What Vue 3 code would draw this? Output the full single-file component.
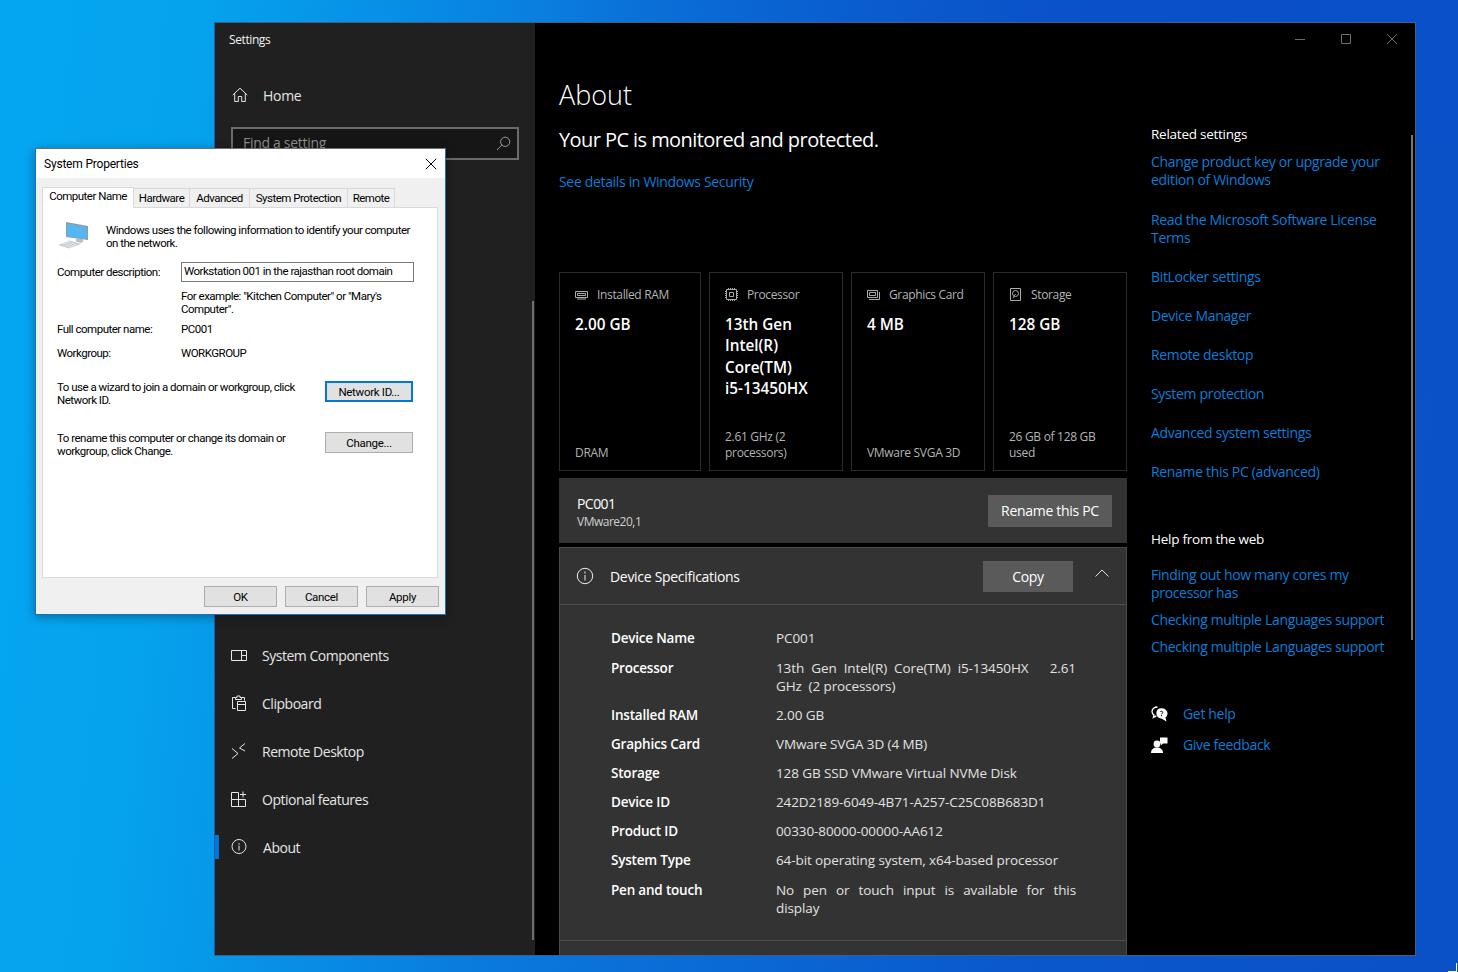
<script setup>
const cards = [
  { key: 'ram', title: 'Installed RAM', value: ['2.00 GB'], foot: ['DRAM'], wide: true },
  { key: 'cpu', title: 'Processor', value: ['13th Gen', 'Intel(R)', 'Core(TM)', 'i5-13450HX'], foot: ['2.61 GHz (2', 'processors)'] },
  { key: 'gpu', title: 'Graphics Card', value: ['4 MB'], foot: ['VMware SVGA 3D'] },
  { key: 'disk', title: 'Storage', value: ['128 GB'], foot: ['26 GB of 128 GB', 'used'] }
]

const specs = [
  { label: 'Device Name', value: 'PC001' },
  { label: 'Processor', value: '13th Gen Intel(R) Core(TM) i5-13450HX \u00a0 2.61 GHz \u00a0(2 processors)' },
  { label: 'Installed RAM', value: '2.00 GB' },
  { label: 'Graphics Card', value: 'VMware SVGA 3D (4 MB)' },
  { label: 'Storage', value: '128 GB SSD VMware Virtual NVMe Disk' },
  { label: 'Device ID', value: '242D2189-6049-4B71-A257-C25C08B683D1' },
  { label: 'Product ID', value: '00330-80000-00000-AA612' },
  { label: 'System Type', value: '64-bit operating system, x64-based processor' },
  { label: 'Pen and touch', value: 'No pen or touch input is available for this display' }
]

const related = [
  { text: 'Change product key or upgrade your edition of Windows', gap: 22 },
  { text: 'Read the Microsoft Software License Terms', gap: 21 },
  { text: 'BitLocker settings', gap: 21 },
  { text: 'Device Manager', gap: 21 },
  { text: 'Remote desktop', gap: 21 },
  { text: 'System protection', gap: 21 },
  { text: 'Advanced system settings', gap: 21 },
  { text: 'Rename this PC (advanced)', gap: 0 }
]

const tabs = ['Hardware', 'Advanced', 'System Protection', 'Remote']
</script>

<template>
  <div class="desktop">
    <div class="settings">
      <aside class="side">
        <div class="app-title">Settings</div>
        <div class="home">
          <svg width="16" height="16" viewBox="0 0 16 16" fill="none" stroke="#e6e6e6" stroke-width="1">
            <path d="M.8 8 8 1.2 15.2 8M2.7 6.400v8.100h3.600V9.500h3.400v5h3.600V6.400" />
          </svg>
          <span>Home</span>
        </div>
        <div class="search">
          <span class="search-text">Find a setting</span>
          <svg width="15" height="15" viewBox="0 0 15 15" fill="none" stroke="#9a9a9a" stroke-width="1">
            <circle cx="9.200" cy="5.800" r="4.600" />
            <path d="M5.800 9 1 14" />
          </svg>
        </div>
        <nav class="nav">
          <div class="nav-row">
            <svg width="16" height="16" viewBox="0 0 16 16" fill="none" stroke="#e6e6e6"><path d="M.5 3.500h15v10H.5zM10.500 3.500v10M10.500 8.500h5" /></svg>
            <span>System Components</span>
          </div>
          <div class="nav-row">
            <svg width="16" height="16" viewBox="0 0 16 16" fill="none" stroke="#e6e6e6"><path d="M4.500 13.500h-3v-11h3M10.500 2.500h3v3M4.500 2.500h1.500v-1.500h3v1.500h1.500v2h-6zM6.500 6.500h8v9h-8zM6.500 9.500h8" /></svg>
            <span>Clipboard</span>
          </div>
          <div class="nav-row">
            <svg width="16" height="16" viewBox="0 0 16 16" fill="none" stroke="#e6e6e6"><path d="M1 5.500 7 10.500 1 15.500M14 .5 8.500 5 14 8" /></svg>
            <span>Remote Desktop</span>
          </div>
          <div class="nav-row">
            <svg width="16" height="16" viewBox="0 0 16 16" fill="none" stroke="#e6e6e6"><path d="M.5 1.500h7v7h-7zM.5 8.500h7v7h-7zM7.500 8.500h7v7h-7zM12 .5v6M9 3.500h6" /></svg>
            <span>Optional features</span>
          </div>
          <div class="nav-row active">
            <svg width="16" height="16" viewBox="0 0 16 16" fill="none" stroke="#e6e6e6">
              <circle cx="8" cy="7.500" r="7" />
              <path d="M8 6.500v5M8 4v1.500" />
            </svg>
            <span class="about-text">About</span>
          </div>
        </nav>
        <div class="side-scroll"></div>
      </aside>

      <main class="main">
        <div class="caption">
          <svg width="12" height="12" viewBox="0 0 12 12" fill="none" stroke="#6d6d6d"><path d="M1 6.500h10" /></svg>
          <svg width="12" height="12" viewBox="0 0 12 12" fill="none" stroke="#6d6d6d"><path d="M1.500 1.500h9v9h-9z" /></svg>
          <svg width="12" height="12" viewBox="0 0 12 12" fill="none" stroke="#6d6d6d"><path d="m1 1 10 10M11 1 1 11" /></svg>
        </div>

        <section class="left">
          <h1>About</h1>
          <h2>Your PC is monitored and protected.</h2>
          <a class="link security">See details in Windows Security</a>

          <div class="cards">
            <div v-for="c in cards" :key="c.key" class="card" :class="{ wide: c.wide }">
              <div class="card-head">
                <svg v-if="c.key === 'ram'" width="13" height="13" viewBox="0 0 13 13" fill="none" stroke="#aaa"><path d="M.5 3.500h12v6H.5zM2.500 5.500h8v2h-8zM2 11h9" /></svg>
                <svg v-else-if="c.key === 'cpu'" width="13" height="13" viewBox="0 0 13 13" fill="none" stroke="#aaa"><path d="M1.500 1.500h10v10h-10zM4.500 4.500h4v4h-4z" /><path d="M.5 3v7M12.500 3v7M3 .5h7M3 12.500h7" stroke-dasharray="1 1" /></svg>
                <svg v-else-if="c.key === 'gpu'" width="13" height="13" viewBox="0 0 13 13" fill="none" stroke="#aaa"><path d="M.5 2.500h10v7H.5zM2.500 4.500h6v3h-6zM12.500 4v7.500H2" /></svg>
                <svg v-else width="13" height="13" viewBox="0 0 13 13" fill="none" stroke="#aaa"><path d="M1.500.5h10v12h-10z" /><circle cx="6.500" cy="5.500" r="3" /><path d="M6.500 6 4 10" /></svg>
                <span>{{ c.title }}</span>
              </div>
              <div class="card-value">
                <div v-for="v in c.value" :key="v">{{ v }}</div>
              </div>
              <div class="card-foot">
                <div v-for="f in c.foot" :key="f">{{ f }}</div>
              </div>
            </div>
          </div>

          <div class="pc-card">
            <div class="pc-text">
              <div class="pc-name">PC001</div>
              <div class="pc-model">VMware20,1</div>
            </div>
            <button class="dark-btn rename">Rename this PC</button>
          </div>

          <div class="spec-card">
            <div class="spec-head">
              <svg width="18" height="18" viewBox="0 0 18 18" fill="none" stroke="#eee">
                <circle cx="9" cy="9" r="7.700" />
                <path d="M9 8v5.500M9 4.500v2" />
              </svg>
              <span class="spec-title">Device Specifications</span>
              <button class="dark-btn copy">Copy</button>
              <svg class="chevron" width="14" height="8" viewBox="0 0 14 8" fill="none" stroke="#ddd"><path d="m.5 7.500 6.500-6.500 6.500 6.500" /></svg>
            </div>
            <div class="spec-body">
              <div v-for="s in specs" :key="s.label" class="spec-row">
                <div class="spec-label">{{ s.label }}</div>
                <div class="spec-value">{{ s.value }}</div>
              </div>
            </div>
            <div class="spec-end"></div>
          </div>
        </section>

        <section class="right">
          <h3>Related settings</h3>
          <a v-for="r in related" :key="r.text" class="link side-link" :style="{ marginBottom: r.gap + 'px' }">{{ r.text }}</a>

          <h3 class="web">Help from the web</h3>
          <a class="link side-link first-web">Finding out how many cores my processor has</a>
          <a class="link side-link">Checking multiple Languages support</a>
          <a class="link side-link">Checking multiple Languages support</a>

          <div class="help-row get-help">
            <svg width="17" height="16" viewBox="0 0 17 16" fill="none" stroke="#fff" stroke-width="1.300">
              <path d="M6.500 1C3.400 1 1 3 1 5.600c0 1.500.8 2.700 2 3.500L2.400 11.400l2.800-1.500" />
              <path d="M10.500 3c3 0 5.400 2 5.400 4.600 0 1.600-.8 3-2.100 3.800l.7 2.800-3.300-2c-3 0-5.200-2-5.200-4.600C6 5 7.800 3 10.500 3Z" fill="#fff" />
              <path d="M9.200 6c.3-1 2.500-1 2.500.4 0 1-1.200 1-1.200 2M10.500 9.200v1" stroke="#000" stroke-width="1" />
            </svg>
            <a class="link">Get help</a>
          </div>
          <div class="help-row">
            <svg width="17" height="16" viewBox="0 0 17 16" fill="#fff">
              <circle cx="6" cy="7" r="3.400" />
              <path d="M0 16c0-3.500 2.500-5.400 6-5.400s6 1.900 6 5.400Z" />
              <path d="M9 .5h7.500v6H12l-2 1.800V6.500H9Z" />
            </svg>
            <a class="link">Give feedback</a>
          </div>
        </section>
        <div class="main-scroll"></div>
      </main>
    </div>

    <div class="dialog">
      <div class="dlg-title">
        <span class="dlg-name">System Properties</span>
        <svg width="12" height="12" viewBox="0 0 12 12" fill="none" stroke="#000"><path d="M.8.800l10.400 10.400M11.200.800.800 11.200" /></svg>
      </div>
      <div class="dlg-body">
        <div class="tabs">
          <div class="tab selected">Computer Name</div>
          <div v-for="t in tabs" :key="t" class="tab">{{ t }}</div>
        </div>
        <div class="panel">
          <div class="intro">
            <svg class="pc-icon" width="34" height="30" viewBox="0 0 34 30">
              <path d="M9 1 31 5v14L9 16Z" fill="#8f9ba3" />
              <path d="M10 2.500 30 6v12L10 15.500Z" fill="#55b6f2" />
              <path d="M19 17.500v3l5 1.500 2-1v-3Z" fill="#b9c0c5" />
              <path d="M1 24 13 19.500 24 23 12 27.500Z" fill="#c9ced2" />
              <path d="M5 23.500 14 20.500M8 25l9-3M11 26.500l8-3" stroke="#eef0f1" stroke-width=".8" />
            </svg>
            <p>Windows uses the following information to identify your computer<br />on the network.</p>
          </div>

          <div class="field desc">
            <label>Computer description:</label>
            <div class="input">Workstation 001 in the rajasthan root domain</div>
          </div>
          <p class="example">For example: "Kitchen Computer" or "Mary's<br />Computer".</p>
          <div class="field full">
            <label>Full computer name:</label>
            <span>PC001</span>
          </div>
          <div class="field group">
            <label>Workgroup:</label>
            <span>WORKGROUP</span>
          </div>

          <div class="action first">
            <p>To use a wizard to join a domain or workgroup, click<br />Network ID.</p>
            <button class="win-btn focus">Network ID...</button>
          </div>
          <div class="action second">
            <p>To rename this computer or change its domain or<br />workgroup, click Change.</p>
            <button class="win-btn">Change...</button>
          </div>
        </div>
        <div class="dlg-foot">
          <button class="win-btn">OK</button>
          <button class="win-btn">Cancel</button>
          <button class="win-btn">Apply</button>
        </div>
      </div>
    </div>
    <div class="corner"></div>
  </div>
</template>

<style>
html, body {
  margin: 0;
  overflow: hidden;
}
</style>

<style scoped>
.desktop {
  position: relative;
  width: 1458px;
  height: 972px;
  overflow: hidden;
  font-family: "Open Sans", "Noto Sans", sans-serif;
  background:
    radial-gradient(ellipse 700px 500px at 1250px 0, #0a4fc8 0, rgba(10, 79, 200, 0) 100%),
    linear-gradient(96deg, #04a6f2 0, #05a3ee 200px, #0a78dc 600px, #0a58cc 1100px, #0a50c6 100%);
}

/* settings window */
.settings {
  position: absolute;
  left: 214px;
  top: 22px;
  width: 1202px;
  height: 934px;
  box-sizing: border-box;
  border: 1px solid #3f5f86;
  border-left-color: #1a5fa8;
  display: flex;
  background: #000;
}

.side {
  position: relative;
  width: 320px;
  flex-shrink: 0;
  display: flex;
  flex-direction: column;
  background: #202020;
  color: #e6e6e6;
}

.app-title {
  padding: 9px 0 0 14px;
  height: 25px;
  font-size: 12px;
  line-height: 16px;
  letter-spacing: -0.4px;
  color: #f2f2f2;
}

.home {
  display: flex;
  align-items: center;
  height: 48px;
  margin-top: 14px;
  padding-left: 17px;
  gap: 15px;
  font-size: 14px;
  letter-spacing: -0.3px;
}

.search {
  display: flex;
  align-items: center;
  justify-content: space-between;
  box-sizing: border-box;
  height: 33px;
  margin: 8px 16px 0;
  padding: 0 6px 0 10px;
  background: #161616;
  border: 2px solid #6b6b6b;
  color: #8c8c8c;
  font-size: 14px;
  letter-spacing: -0.3px;
}

.search-text {
  padding-bottom: 3px;
}

.nav {
  margin-top: auto;
  margin-bottom: 84px;
}

.nav-row {
  position: relative;
  display: flex;
  align-items: center;
  height: 48px;
  padding-left: 16px;
  gap: 15px;
  font-size: 14px;
  letter-spacing: -0.47px;
}

.about-text {
  margin-left: 1px;
}

.nav-row.active::before {
  content: "";
  position: absolute;
  left: 0;
  top: 12px;
  width: 4px;
  height: 24px;
  background: #0078d7;
}

.side-scroll {
  position: absolute;
  right: 1px;
  top: 278px;
  bottom: 15px;
  width: 2px;
  background: #6e6e6e;
}

.main {
  position: relative;
  flex: 1;
  display: flex;
  overflow: hidden;
  padding-left: 24px;
  color: #fff;
}

.caption {
  position: absolute;
  right: 0;
  top: 0;
  display: flex;
  align-items: center;
  gap: 34px;
  height: 32px;
  padding-right: 17px;
}

.left {
  width: 568px;
  flex-shrink: 0;
}

h1 {
  margin: 52px 0 0;
  height: 40px;
  font-size: 27px;
  line-height: 40px;
  font-weight: 300;
}

h2 {
  margin: 11px 0 0;
  height: 28px;
  font-size: 20px;
  line-height: 28px;
  font-weight: 400;
  letter-spacing: -0.57px;
}

.link {
  color: #0a7ed9;
  font-size: 14px;
  line-height: 18px;
  letter-spacing: -0.33px;
}

.security {
  display: block;
  margin-top: 19px;
}

.cards {
  display: flex;
  gap: 8px;
  margin-top: 81px;
}

.card {
  box-sizing: border-box;
  width: 134px;
  height: 199px;
  padding: 12px 15px 0;
  border: 1px solid #2b2b2b;
  display: flex;
  flex-direction: column;
}

.card.wide {
  width: 142px;
}

.card-head {
  display: flex;
  align-items: center;
  gap: 9px;
  height: 18px;
  font-size: 12px;
  letter-spacing: -0.35px;
  color: #b4b4b4;
  white-space: nowrap;
}

.card-value {
  margin-top: 11px;
  font-size: 15.300px;
  line-height: 21.330px;
  font-weight: 600;
}

.card-foot {
  margin-top: auto;
  margin-bottom: 9px;
  font-size: 12px;
  line-height: 16px;
  letter-spacing: -0.3px;
  color: #b4b4b4;
  white-space: nowrap;
}

.pc-card {
  display: flex;
  align-items: center;
  justify-content: space-between;
  box-sizing: border-box;
  height: 65px;
  margin-top: 7px;
  padding: 0 15px 0 18px;
  background: #333;
}

.pc-text {
  padding-top: 4px;
}

.pc-name {
  font-size: 14px;
  line-height: 18px;
  letter-spacing: -0.55px;
}

.pc-model {
  font-size: 12px;
  line-height: 18px;
  letter-spacing: -0.5px;
  color: #cfcfcf;
}

.dark-btn {
  border: 0;
  padding: 0;
  background: #5a5a5a;
  color: #fff;
  font-family: inherit;
  font-size: 14px;
  letter-spacing: -0.3px;
}

.rename {
  width: 124px;
  height: 32px;
}

.spec-card {
  margin-top: 4px;
  background: #333;
  border: 1px solid #4a4a4a;
  border-bottom: 0;
}

.spec-head {
  display: flex;
  align-items: center;
  height: 56px;
  padding-left: 16px;
  border-bottom: 1px solid #4d4d4d;
}

.spec-title {
  flex: 1;
  margin-left: 16px;
  font-size: 14px;
  letter-spacing: -0.3px;
}

.copy {
  width: 90px;
  height: 31px;
}

.chevron {
  margin: -6px 17px 0 22px;
}

.spec-body {
  padding: 24px 50px 23px 51px;
  border-bottom: 1px solid #4d4d4d;
}

.spec-row {
  display: flex;
  margin-bottom: 11px;
  font-size: 13.500px;
  line-height: 18px;
}

.spec-row:nth-child(1),
.spec-row:nth-child(8) {
  margin-bottom: 12px;
}

.spec-row:last-child {
  margin-bottom: 0;
}

.spec-label {
  width: 165px;
  flex-shrink: 0;
  font-weight: 600;
  letter-spacing: -0.2px;
}

.spec-value {
  width: 300px;
  text-align: justify;
  letter-spacing: -0.1px;
  color: #e2e2e2;
}

.spec-end {
  height: 40px;
}

.right {
  width: 240px;
  margin-left: 24px;
  padding-top: 102px;
  display: flex;
  flex-direction: column;
  align-items: flex-start;
}

h3 {
  margin: 0 0 10px;
  font-size: 13.500px;
  line-height: 18px;
  font-weight: 400;
  letter-spacing: -0.25px;
}

h3.web {
  margin-top: 49px;
  margin-bottom: 18px;
}

.side-link {
  display: block;
}

.first-web {
  margin-bottom: 9px;
}

.side-link + .side-link {
  margin-bottom: 9px;
}

.help-row {
  display: flex;
  align-items: center;
  gap: 15px;
  height: 18px;
  margin-bottom: 13px;
}

.get-help {
  margin-top: 40px;
}

.main-scroll {
  position: absolute;
  right: 2px;
  top: 112px;
  width: 2px;
  height: 505px;
  background: #777;
}

/* system properties dialog */
.dialog {
  position: absolute;
  left: 35px;
  top: 148px;
  width: 411px;
  height: 467px;
  box-sizing: border-box;
  border: 1px solid #1f6fb5;
  border-top-color: #6d6d6d;
  display: flex;
  flex-direction: column;
  color: #000;
  font-family: Roboto, "Open Sans", sans-serif;
  font-size: 11.500px;
  line-height: 13px;
  letter-spacing: -0.5px;
  box-shadow: 0 2px 10px rgba(0, 0, 0, 0.35);
}

.dlg-title {
  display: flex;
  align-items: center;
  justify-content: space-between;
  height: 29px;
  flex-shrink: 0;
  padding: 0 8px 0 8px;
  background: #fff;
  font-size: 12px;
  letter-spacing: -0.2px;
}

.dlg-name {
  padding-top: 2px;
}

.dlg-body {
  flex: 1;
  display: flex;
  flex-direction: column;
  padding: 0 6px;
  background: #f0f0f0;
}

.tabs {
  display: flex;
  align-items: flex-end;
  height: 30px;
  flex-shrink: 0;
  margin-bottom: -1px;
  position: relative;
  z-index: 1;
}

.tab {
  box-sizing: border-box;
  height: 20px;
  padding: 3px 0 0;
  text-align: center;
  background: #f0f0f0;
  border: 1px solid #d9d9d9;
  border-left: 0;
  white-space: nowrap;
}

.tab:nth-child(2) {
  width: 56px;
}

.tab:nth-child(3) {
  width: 60px;
}

.tab:nth-child(4) {
  width: 98px;
}

.tab:nth-child(5) {
  width: 47px;
}

.tab.selected {
  width: 92px;
  height: 21px;
  padding: 2px 0 0;
  background: #fff;
  border-left: 1px solid #d9d9d9;
  border-bottom-color: #fff;
}

.panel {
  box-sizing: border-box;
  width: 396px;
  height: 371px;
  flex-shrink: 0;
  padding: 0 14px;
  background: #fff;
  border: 1px solid #d9d9d9;
}

.panel p {
  margin: 0;
}

.intro {
  display: flex;
  gap: 15px;
  height: 42px;
  padding-top: 16px;
  box-sizing: border-box;
}

.pc-icon {
  margin-top: -3px;
}

.field {
  display: flex;
  align-items: center;
}

.field label {
  width: 124px;
  flex-shrink: 0;
}

.desc {
  margin-top: 12px;
}

.input {
  box-sizing: border-box;
  width: 233px;
  height: 20px;
  padding: 2px 2px;
  border: 1px solid #7a7a7a;
  white-space: nowrap;
}

.panel .example {
  margin: 8px 0 0 124px;
}

.full {
  margin-top: 7px;
}

.group {
  margin-top: 11px;
}

.action {
  display: flex;
  justify-content: space-between;
  align-items: flex-start;
  padding-right: 10px;
}

.action.first {
  margin-top: 21px;
}

.action.second {
  margin-top: 25px;
}

.action .win-btn {
  width: 88px;
  margin-top: 0;
}

.win-btn {
  box-sizing: border-box;
  width: 73px;
  height: 21px;
  padding: 0;
  background: #e1e1e1;
  border: 1px solid #adadad;
  color: #000;
  font-family: inherit;
  font-size: 11.500px;
  letter-spacing: -0.3px;
}

.win-btn.focus {
  border: 2px solid #0078d7;
}

.dlg-foot {
  display: flex;
  justify-content: flex-end;
  gap: 8px;
  margin-top: 8px;
}

.corner {
  position: absolute;
  right: 1px;
  bottom: 0;
  width: 8px;
  height: 8px;
  border-right: 1px solid #fff;
  border-bottom: 1px solid #fff;
}
</style>
